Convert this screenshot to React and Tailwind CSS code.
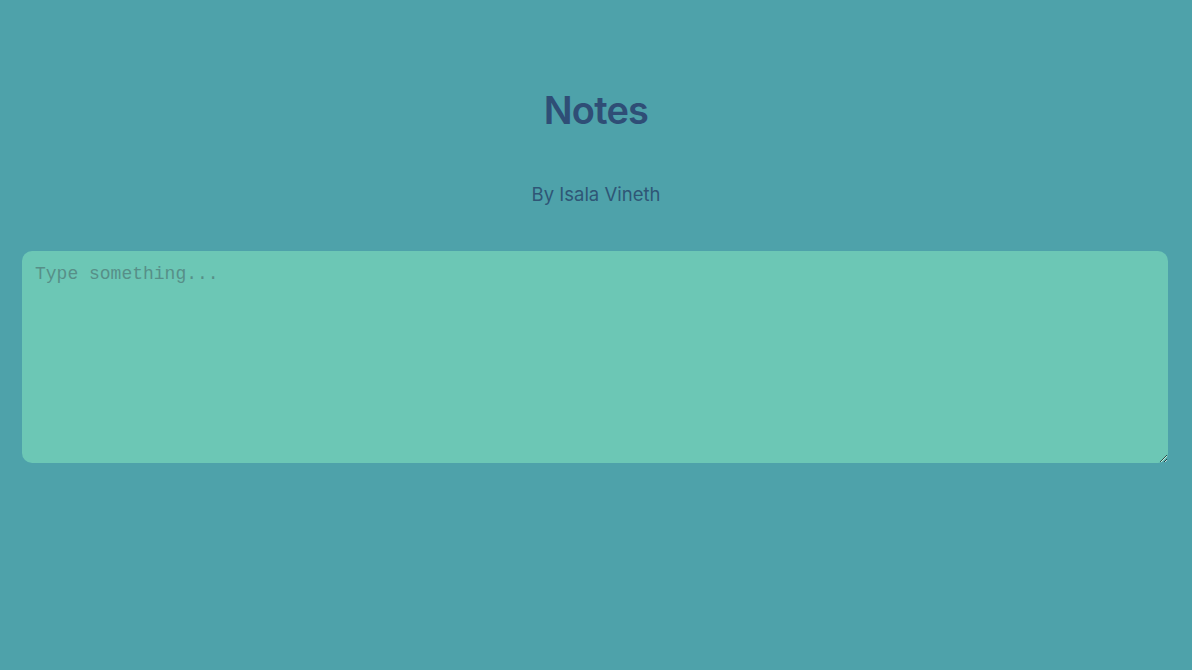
export default function App() {
  return (
    <div className="min-h-[670px] w-full bg-[#4ea2aa] flex flex-col items-center" style={{ fontFamily: "Inter, 'Noto Sans', sans-serif" }}>
      <h1 className="mt-[84px] text-[38px] leading-[52px] font-semibold text-[#2f4e76] tracking-[-0.8px]">Notes</h1>
      <p className="mt-[46px] text-[18.5px] leading-[24px] text-[#2f5676]">By Isala Vineth</p>
      <div className="w-full pl-[22px] pr-[24px] mt-[45px]">
        <textarea
          placeholder="Type something..."
          className="block w-full h-[212px] bg-[#6cc7b5] rounded-[10px] px-[13px] py-[10px] text-[18px] leading-[26px] outline-none placeholder:text-[#578f88] text-[#2f4e76]"
          style={{ fontFamily: "'Liberation Mono', monospace" }}
        />
      </div>
    </div>
  );
}
